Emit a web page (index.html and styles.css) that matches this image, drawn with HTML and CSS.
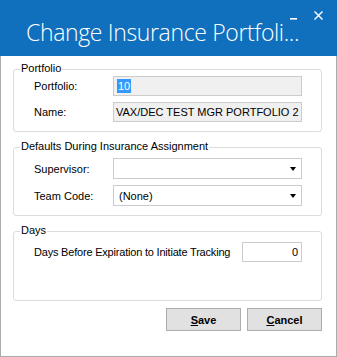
FILE: index.html
```html
<!DOCTYPE html>
<html>
<head>
<meta charset="utf-8">
<link rel="stylesheet" href="styles.css">
</head>
<body>
<div class="window">
  <div class="titlebar">
    <div class="title">Change Insurance Portfoli...</div>
    <svg class="controls" width="52" height="30" viewBox="0 0 52 30">
      <rect x="5" y="18" width="7" height="1.6" fill="#fff"/>
      <path d="M29.5 11.5 L37.5 19.5 M37.5 11.5 L29.5 19.5" stroke="#fff" stroke-width="1.4" fill="none"/>
    </svg>
  </div>
  <div class="client">
    <div class="group g1">
      <div class="legend">Portfolio</div>
      <div class="row first">
        <span class="label">Portfolio:</span>
        <div class="field ro"><span class="sel">10</span></div>
      </div>
      <div class="row">
        <span class="label">Name:</span>
        <div class="field ro">VAX/DEC TEST MGR PORTFOLIO 2</div>
      </div>
    </div>
    <div class="group g2">
      <div class="legend">Defaults During Insurance Assignment</div>
      <div class="row first">
        <span class="label">Supervisor:</span>
        <div class="field combo"><span></span><i class="arrow"></i></div>
      </div>
      <div class="row">
        <span class="label">Team Code:</span>
        <div class="field combo"><span>(None)</span><i class="arrow"></i></div>
      </div>
    </div>
    <div class="group g3">
      <div class="legend">Days</div>
      <div class="drow">
        <span class="label tight">Days Before Expiration to Initiate Tracking</span>
        <div class="field num">0</div>
      </div>
    </div>
    <div class="buttons">
      <button class="btn"><u>S</u>ave</button>
      <button class="btn"><u>C</u>ancel</button>
    </div>
  </div>
</div>
</body>
</html>
```
FILE: styles.css
```css
* { box-sizing: border-box; }
html, body { margin: 0; padding: 0; background: #fff; }
body {
  font-family: "Liberation Sans", Arial, sans-serif;
  font-size: 11px;
  color: #000;
}
.window { width: 337px; height: 357px; overflow: hidden; }
.titlebar {
  height: 56px;
  background: #1170bd;
  display: flex;
  align-items: flex-start;
}
.title {
  flex: 1;
  min-width: 0;
  overflow: visible;
  color: #fff;
  font-family: "Open Sans", "Noto Sans", sans-serif;
  font-weight: 300;
  font-size: 23px;
  line-height: 30px;
  padding: 17px 0 0 26px;
  white-space: nowrap;
  letter-spacing: -0.35px;
}
.controls { display: block; flex: none; }
.client {
  height: 301px;
  border: 1px solid #ababab;
  border-top: none;
  padding-top: 13px;
}
.group {
  border: 1px solid #dcdcdc;
  border-radius: 3px;
  margin: 0 14px 0 12px;
  padding: 0 19px 9px 20px;
}
.g2, .g3 { margin-top: 15px; }
.g3 { padding-bottom: 38px; }
.legend {
  display: table;
  margin: -9px 0 0 -14px;
  padding: 0 1px;
  background: #fff;
  line-height: 14px;
  height: 14px;
}
.row {
  display: grid;
  grid-template-columns: 79px 1fr;
  align-items: center;
  margin-top: 6px;
}
.g1 .row.first { margin-top: 1px; }
.g2 .row.first { margin-top: 5px; }
.label { white-space: nowrap; }
.tight { letter-spacing: -0.2px; }
.field {
  height: 20px;
  border: 1px solid #cccccc;
  line-height: 18px;
  padding-left: 2px;
  white-space: nowrap;
  overflow: hidden;
}
.ro { background: #f0f0f0; }
.sel { background: #3399ff; color: #fff; display: inline-block; line-height: 14px; padding: 0 1px; margin-left: 1px; }
.combo {
  height: 21px;
  background: #fff;
  display: flex;
  align-items: center;
  justify-content: space-between;
  padding: 0 5px 0 5px;
}
.arrow {
  width: 0; height: 0;
  border-left: 3.5px solid transparent;
  border-right: 3.5px solid transparent;
  border-top: 4px solid #000;
  margin-top: 1px;
}
.drow {
  display: flex;
  align-items: center;
  justify-content: space-between;
  margin-top: 5px;
}
.num {
  width: 60px;
  background: #fff;
  text-align: right;
  padding-right: 3px;
}
.buttons {
  display: flex;
  justify-content: flex-end;
  gap: 6px;
  margin: 7px 14px 0 0;
}
.btn {
  width: 75px;
  height: 23px;
  background: #e1e1e1;
  border: 1px solid #adadad;
  border-radius: 0;
  font-family: "Liberation Sans", Arial, sans-serif;
  font-size: 11px;
  font-weight: bold;
  color: #000;
  padding: 0;
}
```
